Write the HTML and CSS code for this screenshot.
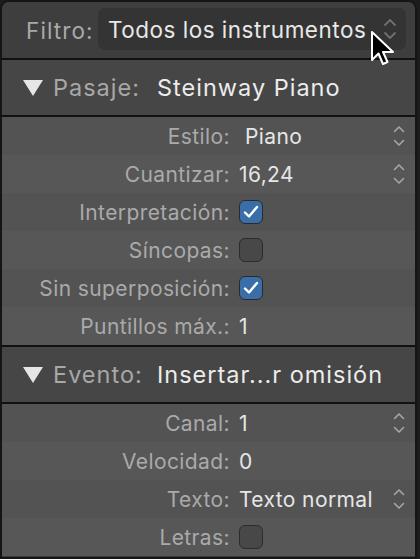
FILE: index.html
```html
<!DOCTYPE html>
<html lang="es">
<head>
<meta charset="utf-8">
<link rel="stylesheet" href="styles.css">
</head>
<body>
<div class="panel">
  <div class="filter-bar">
    <span class="filter-label">Filtro:</span>
    <div class="popup">
      <span class="popup-text">Todos los instrumentos</span>
      <svg class="popup-chev" width="14" height="22" viewBox="0 0 14 22"><path d="M2 7 L7 2 L12 7 M2 15 L7 20 L12 15" fill="none" stroke="#6f6f6f" stroke-width="1.8" stroke-linecap="round" stroke-linejoin="round"/></svg>
    </div>
  </div>
  <div class="sep"></div>
  <div class="section-head">
    <svg class="tri" width="20" height="16" viewBox="0 0 20 16"><path d="M0 0 H20 L10 16 Z" fill="#e6e6e6"/></svg>
    <span class="head-label">Pasaje:</span>
    <span class="head-value">Steinway Piano</span>
  </div>
  <div class="sep"></div>
  <div class="rows">
    <div class="row dark"><span class="label">Estilo:</span><span class="value pop">Piano</span><svg class="chev" width="12" height="22" viewBox="0 0 12 22"><path d="M1.5 6.5 L6 2 L10.5 6.5 M1.5 15.5 L6 20 L10.5 15.5" fill="none" stroke="#a6a6a6" stroke-width="1.6" stroke-linecap="round" stroke-linejoin="round"/></svg></div>
    <div class="row light"><span class="label">Cuantizar:</span><span class="value">16,24</span><svg class="chev" width="12" height="22" viewBox="0 0 12 22"><path d="M1.5 6.5 L6 2 L10.5 6.5 M1.5 15.5 L6 20 L10.5 15.5" fill="none" stroke="#a6a6a6" stroke-width="1.6" stroke-linecap="round" stroke-linejoin="round"/></svg></div>
    <div class="row dark"><span class="label">Interpretación:</span><span class="check on"><svg width="16" height="14" viewBox="0 0 16 14"><path d="M2 7.5 L6 11.5 L14 2" fill="none" stroke="#ffffff" stroke-width="2.4" stroke-linecap="round" stroke-linejoin="round"/></svg></span></div>
    <div class="row light"><span class="label">Síncopas:</span><span class="check"></span></div>
    <div class="row dark"><span class="label">Sin superposición:</span><span class="check on"><svg width="16" height="14" viewBox="0 0 16 14"><path d="M2 7.5 L6 11.5 L14 2" fill="none" stroke="#ffffff" stroke-width="2.4" stroke-linecap="round" stroke-linejoin="round"/></svg></span></div>
    <div class="row light"><span class="label">Puntillos máx.:</span><span class="value">1</span></div>
  </div>
  <div class="sep"></div>
  <div class="section-head">
    <svg class="tri" width="20" height="16" viewBox="0 0 20 16"><path d="M0 0 H20 L10 16 Z" fill="#e6e6e6"/></svg>
    <span class="head-label">Evento:</span>
    <span class="head-value">Insertar...r omisión</span>
  </div>
  <div class="sep"></div>
  <div class="rows">
    <div class="row dark"><span class="label">Canal:</span><span class="value">1</span><svg class="chev" width="12" height="22" viewBox="0 0 12 22"><path d="M1.5 6.5 L6 2 L10.5 6.5 M1.5 15.5 L6 20 L10.5 15.5" fill="none" stroke="#a6a6a6" stroke-width="1.6" stroke-linecap="round" stroke-linejoin="round"/></svg></div>
    <div class="row light"><span class="label">Velocidad:</span><span class="value">0</span></div>
    <div class="row dark"><span class="label">Texto:</span><span class="value">Texto normal</span><svg class="chev" width="12" height="22" viewBox="0 0 12 22"><path d="M1.5 6.5 L6 2 L10.5 6.5 M1.5 15.5 L6 20 L10.5 15.5" fill="none" stroke="#a6a6a6" stroke-width="1.6" stroke-linecap="round" stroke-linejoin="round"/></svg></div>
    <div class="row light"><span class="label">Letras:</span><span class="check"></span></div>
  </div>
  <svg class="cursor" width="27" height="38" viewBox="0 0 27 38"><path d="M2 2 L2 30 L8.5 23.5 L13 34 L17.5 32 L13 22 L23 22 Z" fill="#000000" stroke="#ffffff" stroke-width="2" stroke-linejoin="round"/></svg>
</div>
</body>
</html>
```
FILE: styles.css
```css
* { box-sizing: border-box; }
html, body { margin: 0; padding: 0; }
body {
  background: #1c1c1c;
  width: 420px;
  height: 559px;
  overflow: hidden;
  font-family: Inter, "Noto Sans", sans-serif;
}
.panel {
  position: relative;
  width: 417px;
  height: 559px;
  border: 2px solid #151515;
  border-radius: 9px 9px 0 0;
  background: #3d3d3d;
  overflow: hidden;
  display: flex;
  flex-direction: column;
}
.filter-bar {
  height: 56px;
  display: flex;
  align-items: center;
  padding: 0 9px 0 24px;
  gap: 3px;
  background: #3e3e3e;
  flex: none;
}
.filter-label {
  color: #a9a9a9;
  font-size: 22.5px;
  letter-spacing: 1.1px;
  width: 69px;
  flex: none;
  white-space: nowrap;
}
.popup {
  flex: 1;
  height: 42px;
  margin-top: -2px;
  border-radius: 7px;
  background: #343434;
  display: flex;
  align-items: center;
  padding: 0 9px 0 10px;
}
.popup-text {
  flex: 1;
  color: #e8e8e8;
  font-size: 22.5px;
  letter-spacing: 0.5px;
  white-space: nowrap;
}
.sep {
  height: 2px;
  background: #111111;
  flex: none;
}
.section-head {
  height: 55px;
  display: flex;
  align-items: center;
  padding-left: 21px;
  background: #464646;
  flex: none;
}
.tri { margin-right: 10px; flex: none; }
.head-label {
  color: #a8a8a8;
  font-size: 23.5px;
  width: 104px;
  letter-spacing: 1px;
  flex: none;
}
.head-value {
  color: #ececec;
  font-size: 23.5px;
  letter-spacing: 1px;
  white-space: nowrap;
}
.rows { display: flex; flex-direction: column; flex: none; }
.row {
  height: 38px;
  display: flex;
  align-items: center;
  padding-right: 10px;
}
.row.dark { background: #535353; }
.row.light { background: #575757; }
.label {
  width: 228px;
  text-align: right;
  color: #aaaaaa;
  font-size: 21px;
  letter-spacing: 0.4px;
  margin-right: 9px;
  flex: none;
  white-space: nowrap;
}
.value {
  flex: 1;
  color: #e6e6e6;
  font-size: 21px;
  letter-spacing: 0.4px;
}
.value.pop { padding-left: 6px; }
.chev { flex: none; margin-left: auto; }
.check {
  width: 24px;
  height: 24px;
  border-radius: 6px;
  background: #484848;
  border: 1.5px solid #2c2c2c;
  display: flex;
  align-items: center;
  justify-content: center;
  flex: none;
}
.check.on { background: #3a6ea8; border-color: #2a2a2a; }
.cursor {
  position: absolute;
  left: 368px;
  top: 28px;
}
```
